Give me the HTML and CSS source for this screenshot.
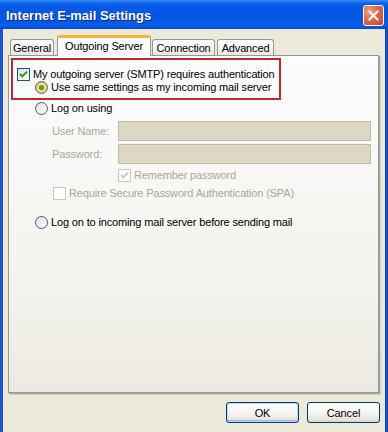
FILE: index.html
```html
<!DOCTYPE html>
<html>
<head>
<meta charset="utf-8">
<link rel="stylesheet" href="styles.css">
</head>
<body>
<div class="window">
  <div class="titlebar">
    <span class="title">Internet E-mail Settings</span>
    <span class="close"><svg width="11" height="11" viewBox="0 0 11 11"><path d="M1.5 1.5 L9.5 9.5 M9.5 1.5 L1.5 9.5" stroke="#fff" stroke-width="2" stroke-linecap="square"/></svg></span>
  </div>
  <div class="client">
    <div class="tabs">
      <div class="tab t-general">General</div>
      <div class="tab active">Outgoing Server</div>
      <div class="tab t-conn">Connection</div>
      <div class="tab t-adv">Advanced</div>
    </div>
    <div class="panel">
      <div class="highlight">
        <div class="row">
          <svg class="box" width="13" height="13" viewBox="0 0 13 13"><defs><linearGradient id="cg" x1="0" y1="0" x2="1" y2="1"><stop offset="0" stop-color="#DCDCD7"/><stop offset="1" stop-color="#FFFFFF"/></linearGradient></defs><rect x="0.5" y="0.5" width="12" height="12" fill="url(#cg)" stroke="#1C5180"/><path d="M3 6 L5.3 8.4 L10 3.6" fill="none" stroke="#21A121" stroke-width="2"/></svg>
          <span>My outgoing server (SMTP) requires authentication</span>
        </div>
        <div class="row indent-r">
          <svg class="box" width="13" height="13" viewBox="0 0 13 13"><defs><radialGradient id="rs" cx="0.5" cy="0.5" r="0.5"><stop offset="0.3" stop-color="#FDF3C2"/><stop offset="1" stop-color="#F5B841"/></radialGradient></defs><circle cx="6.5" cy="6.5" r="6" fill="url(#rs)" stroke="#4A6A94"/><circle cx="6.5" cy="6.5" r="2.6" fill="#3DAA2E"/></svg>
          <span>Use same settings as my incoming mail server</span>
        </div>
      </div>
      <div class="row logon">
        <svg class="box" width="13" height="13" viewBox="0 0 13 13"><defs><linearGradient id="rg" x1="0" y1="0" x2="1" y2="1"><stop offset="0" stop-color="#DCDCD7"/><stop offset="1" stop-color="#FFFFFF"/></linearGradient></defs><circle cx="6.5" cy="6.5" r="6" fill="url(#rg)" stroke="#3D5D86"/></svg>
        <span>Log on using</span>
      </div>
      <div class="fields">
        <span class="lbl">User Name:</span><span class="field"></span>
        <span class="lbl">Password:</span><span class="field"></span>
      </div>
      <div class="row dis remember">
        <svg class="box" width="13" height="13" viewBox="0 0 13 13"><rect x="0.5" y="0.5" width="12" height="12" fill="#FFFFFF" stroke="#CAC8BB"/><path d="M3 6 L5.3 8.4 L10 3.6" fill="none" stroke="#CAC8BB" stroke-width="2"/></svg>
        <span>Remember password</span>
      </div>
      <div class="row dis spa">
        <svg class="box" width="13" height="13" viewBox="0 0 13 13"><rect x="0.5" y="0.5" width="12" height="12" fill="#FFFFFF" stroke="#CAC8BB"/></svg>
        <span>Require Secure Password Authentication (SPA)</span>
      </div>
      <div class="row incoming">
        <svg class="box" width="13" height="13" viewBox="0 0 13 13"><defs><linearGradient id="rg2" x1="0" y1="0" x2="1" y2="1"><stop offset="0" stop-color="#DCDCD7"/><stop offset="1" stop-color="#FFFFFF"/></linearGradient></defs><circle cx="6.5" cy="6.5" r="6" fill="url(#rg2)" stroke="#3D5D86"/></svg>
        <span>Log on to incoming mail server before sending mail</span>
      </div>
    </div>
    <div class="buttons">
      <span class="btn default">OK</span>
      <span class="btn">Cancel</span>
    </div>
  </div>
</div>
</body>
</html>
```
FILE: styles.css
```css
html, body {
  margin: 0;
  padding: 0;
}
body {
  width: 388px;
  height: 432px;
  overflow: hidden;
  font-family: "Liberation Sans", Arial, sans-serif;
  font-size: 11px;
  letter-spacing: -0.15px;
  color: #000;
  background: #ECE9D8;
}
.window {
  width: 388px;
  height: 432px;
  display: flex;
  flex-direction: column;
  background: linear-gradient(to right, #1A56D6, #0A4CDB 50%, #1649C9);
}
.titlebar {
  height: 29px;
  flex: none;
  display: flex;
  align-items: center;
  justify-content: space-between;
  padding: 0 4px 0 6px;
  background: linear-gradient(#3A8CF6 0%, #0C62EA 12%, #0558E8 30%, #0556E3 70%, #0A5FEB 88%, #0549D4 100%);
}
.title {
  color: #fff;
  font-weight: bold;
  font-size: 13px;
  letter-spacing: 0;
  text-shadow: 1px 1px 0 #0A2A8A;
  margin-top: 1px;
}
.close {
  width: 19px;
  height: 19px;
  border: 1px solid #fff;
  border-radius: 3px;
  background: radial-gradient(circle at 30% 30%, #F0A38A 0%, #E06A44 45%, #C9431F 100%);
  display: flex;
  align-items: center;
  justify-content: center;
  margin-top: 1px;
}
.client {
  flex: 1;
  margin: 0 3px;
  background: #ECE9D8;
  padding: 6px 0 0 5px;
  display: flex;
  flex-direction: column;
}
.tabs {
  display: flex;
  align-items: flex-start;
  height: 21px;
  margin-bottom: -1px;
  padding-left: 2px;
  position: relative;
  z-index: 1;
}
.tab {
  margin-top: 4px;
  box-sizing: border-box;
  border: 1px solid #919B9C;
  border-bottom: none;
  border-radius: 3px 3px 0 0;
  background: linear-gradient(#FFFFFF, #F3F3EF 60%, #E9E8E1);
  display: flex;
  align-items: center;
  justify-content: center;
  height: 16px;
  padding-top: 1px;
}
.t-general { width: 44px; }
.t-conn { width: 63px; margin-left: 1px; }
.t-adv { width: 57px; margin-left: 2px; }
.tab.active {
  width: 94px;
  height: 21px;
  margin-top: 0;
  margin-left: 3px;
  border-top: 3px solid #F8B43A;
  background: #FCFCFE;
  align-items: flex-start;
  padding-top: 2px;
}
.panel {
  width: 371px;
  height: 338px;
  box-sizing: border-box;
  border: 1px solid #919B9C;
  box-shadow: 1px 1px 0 #A7A59A, 2px 2px 0 #D3D0C0;
  background: linear-gradient(#FCFCFE, #F5F4EF 60%, #ECEAE2);
  display: flex;
  flex-direction: column;
  align-items: flex-start;
}
.highlight {
  margin: 2px 0 0 2px;
  width: 270px;
  height: 42px;
  box-sizing: border-box;
  border: 2px solid #C8242C;
  padding: 8px 0 0 4px;
}
.row {
  display: flex;
  align-items: center;
  height: 13px;
  line-height: 13px;
  white-space: nowrap;
}
.box {
  flex: none;
  margin-right: 3px;
}
.indent-r { margin-left: 18px; }
.logon { margin: 2px 0 0 26px; }
.fields {
  display: grid;
  grid-template-columns: 66px 253px;
  grid-auto-rows: 20px;
  row-gap: 3px;
  margin: 6px 0 0 43px;
  align-items: center;
  color: #ACA899;
}
.field {
  height: 20px;
  box-sizing: border-box;
  border: 1px solid #C0BCAA;
  background: #DDD8C3;
}
.dis { color: #ACA899; }
.remember { margin: 5px 0 0 109px; }
.spa { margin: 5px 0 0 44px; }
.incoming { margin: 16px 0 0 26px; }
.buttons {
  display: flex;
  justify-content: flex-end;
  gap: 8px;
  padding-right: 5px;
  margin-top: 9px;
}
.btn {
  width: 73px;
  height: 21px;
  box-sizing: border-box;
  border: 1px solid #003C74;
  border-radius: 3px;
  background: linear-gradient(#FFFFFF, #F4F3EE 60%, #E4E1D7 90%, #D6D0C5);
  display: flex;
  align-items: center;
  justify-content: center;
}
.btn.default {
  box-shadow: inset 0 0 0 1px #C3D6F5, inset 0 -1px 0 1px #97B5EC;
}
```
